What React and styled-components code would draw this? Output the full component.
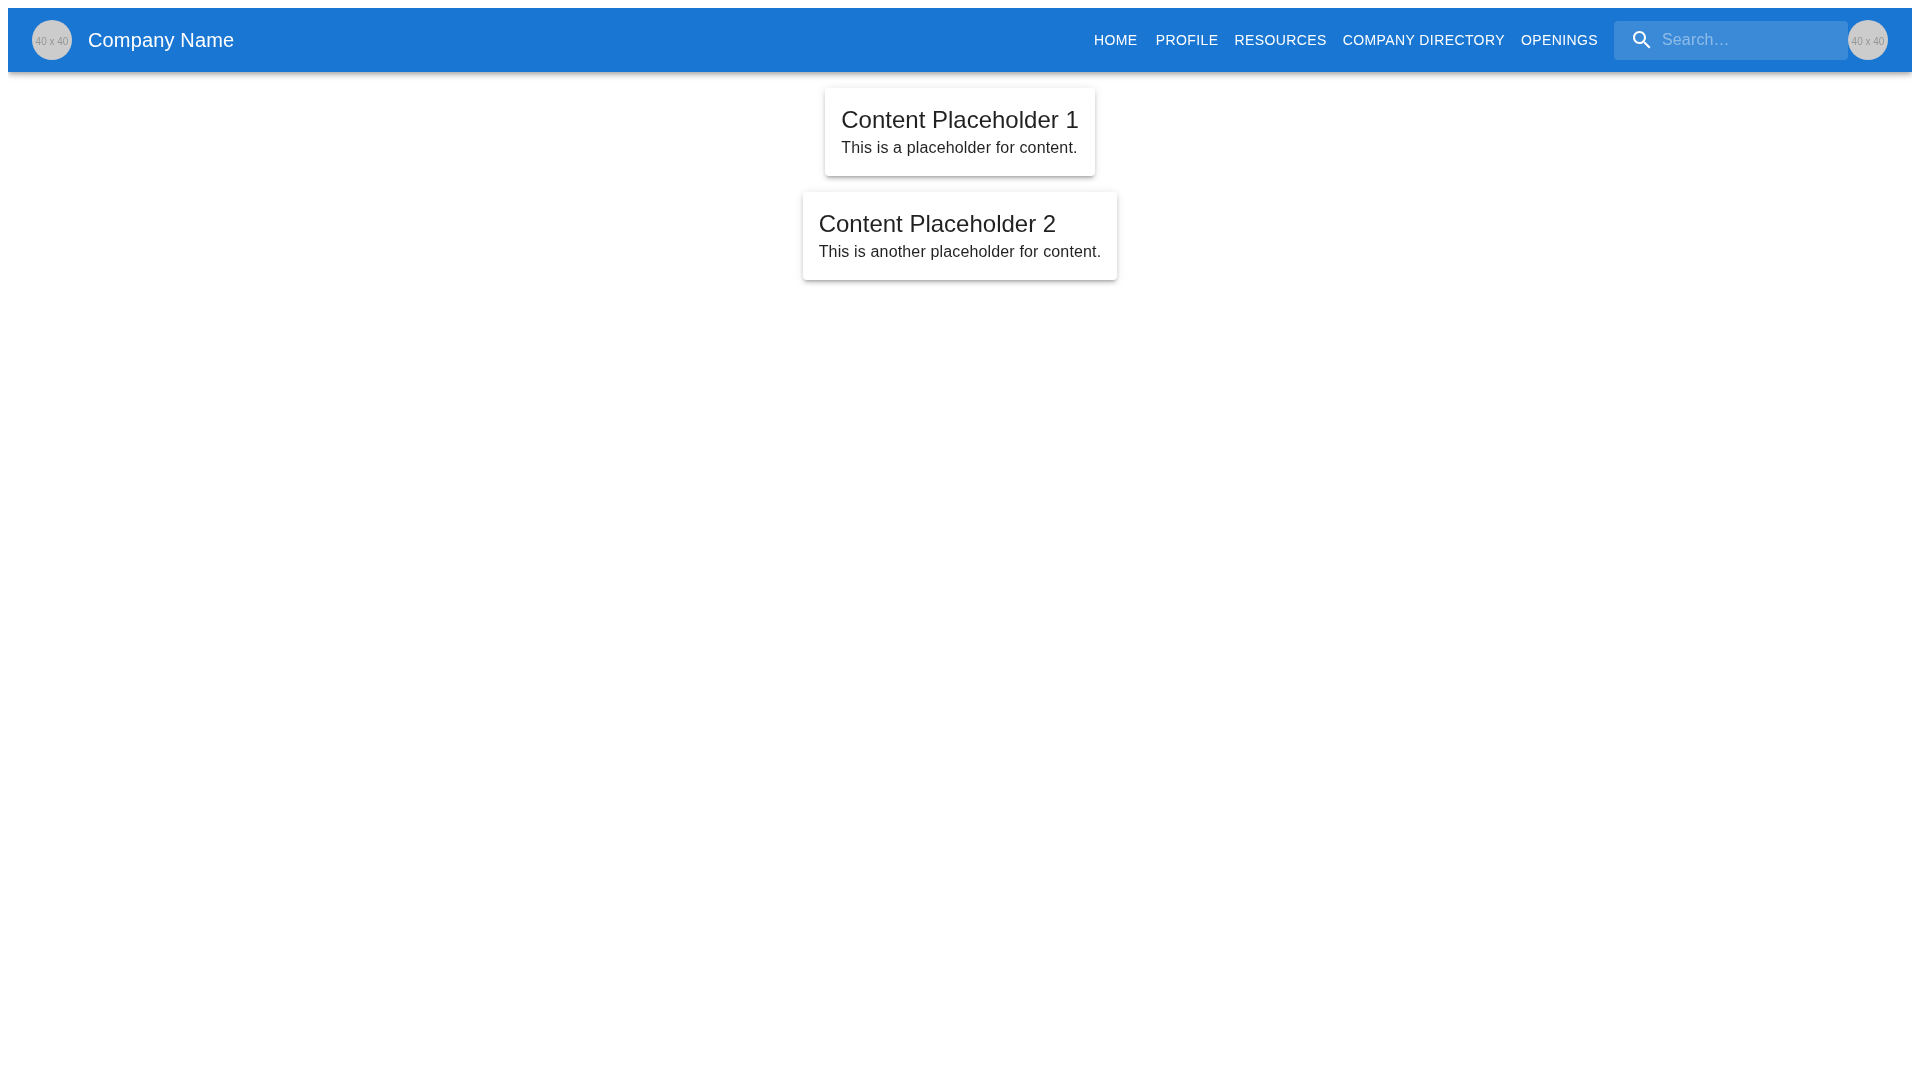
import React from "react";
import styled, { createGlobalStyle } from "styled-components";

const GlobalStyle = createGlobalStyle`
  body {
    margin: 8px;
    background: #fff;
    font-family: "Liberation Sans", Arial, sans-serif;
  }

  /* own layer, keeps the text antialiasing greyscale */
  #root {
    will-change: transform;
  }
`;

const AppBar = styled.header`
  display: flex;
  align-items: center;
  height: 64px;
  padding: 0 24px;
  background: #1976d2;
  color: #fff;
  box-shadow: 0px 2px 4px -1px rgba(0, 0, 0, 0.2),
    0px 4px 5px 0px rgba(0, 0, 0, 0.14), 0px 1px 10px 0px rgba(0, 0, 0, 0.12);
`;

const Avatar = styled.div`
  flex: none;
  display: flex;
  align-items: center;
  justify-content: center;
  width: 40px;
  height: 40px;
  margin-right: ${(props) => props.$gap || 0}px;
  padding-top: 2px;
  box-sizing: border-box;
  border-radius: 50%;
  background: #cccccc;
  color: #969696;
  font-size: 10px;
  white-space: nowrap;
`;

const Title = styled.div`
  flex-grow: 1;
  font-size: 20px;
  font-weight: 500;
  line-height: 1.6;
  letter-spacing: 0.0075em;
`;

const NavButton = styled.button`
  min-width: 64px;
  padding: 6px 8px;
  border: 0;
  border-radius: 4px;
  background: transparent;
  color: inherit;
  font-family: inherit;
  font-size: 14px;
  font-weight: 500;
  line-height: 1.75;
  letter-spacing: 0.02857em;
  text-transform: uppercase;
`;

const Search = styled.div`
  position: relative;
  display: flex;
  width: 234px;
  margin-left: 8px;
  border-radius: 4px;
  background: rgba(255, 255, 255, 0.15);
`;

const SearchIconWrap = styled.div`
  position: absolute;
  top: 0;
  left: 16px;
  display: flex;
  align-items: center;
  height: 100%;
  pointer-events: none;
`;

const SearchInput = styled.input`
  width: 100%;
  height: 39px;
  box-sizing: border-box;
  padding: 8px 8px 8px 48px;
  border: 0;
  outline: 0;
  background: transparent;
  color: inherit;
  font-family: inherit;
  font-size: 16px;
  letter-spacing: 0.00938em;

  &::placeholder {
    color: #fff;
    opacity: 0.42;
  }
`;

const Content = styled.main`
  display: flex;
  flex-direction: column;
  align-items: center;
  padding-bottom: 16px;
`;

const Card = styled.section`
  margin-top: 16px;
  padding: 16px;
  border-radius: 4px;
  background: #fff;
  color: rgba(0, 0, 0, 0.87);
  box-shadow: 0px 3px 3px -2px rgba(0, 0, 0, 0.2),
    0px 3px 4px 0px rgba(0, 0, 0, 0.14), 0px 1px 8px 0px rgba(0, 0, 0, 0.12);
`;

const CardTitle = styled.h5`
  margin: 0;
  font-size: 24px;
  font-weight: 400;
  line-height: 1.334;
`;

const CardText = styled.p`
  margin: 0;
  font-size: 16px;
  line-height: 1.5;
  letter-spacing: 0.00938em;
`;

const links = ["Home", "Profile", "Resources", "Company Directory", "Openings"];

const cards = [
  { title: "Content Placeholder 1", text: "This is a placeholder for content." },
  { title: "Content Placeholder 2", text: "This is another placeholder for content." },
];

const App = () => {
  return (
    <>
      <GlobalStyle />
      <AppBar>
        <Avatar $gap={16}>40 x 40</Avatar>
        <Title>Company Name</Title>
        {links.map((link) => (
          <NavButton key={link}>{link}</NavButton>
        ))}
        <Search>
          <SearchIconWrap>
            <svg width="24" height="24" viewBox="0 0 24 24" fill="#fff">
              <path d="M15.5 14h-.79l-.28-.27C15.41 12.59 16 11.11 16 9.5 16 5.91 13.09 3 9.5 3S3 5.91 3 9.5 5.91 16 9.5 16c1.61 0 3.09-.59 4.23-1.57l.27.28v.79l5 4.99L20.49 19l-4.99-5zm-6 0C7.01 14 5 11.99 5 9.5S7.01 5 9.5 5 14 7.01 14 9.5 11.99 14 9.5 14z" />
            </svg>
          </SearchIconWrap>
          <SearchInput placeholder="Search…" />
        </Search>
        <Avatar>40 x 40</Avatar>
      </AppBar>
      <Content>
        {cards.map((card) => (
          <Card key={card.title}>
            <CardTitle>{card.title}</CardTitle>
            <CardText>{card.text}</CardText>
          </Card>
        ))}
      </Content>
    </>
  );
};

export default App;
